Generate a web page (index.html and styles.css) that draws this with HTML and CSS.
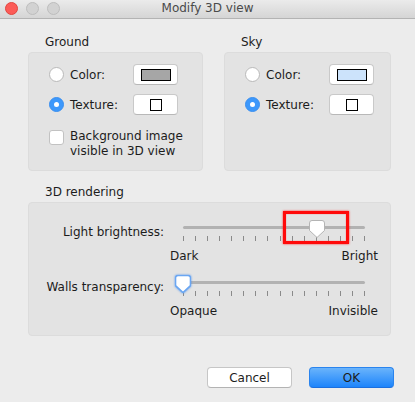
FILE: index.html
```html
<!DOCTYPE html>
<html lang="en">
<head>
    <title>Modify 3D view</title>
    <link rel="stylesheet" href="styles.css">
</head>
<body>
    <div class="titlebar">
        <div class="lights">
            <span class="light red"></span>
            <span class="light"></span>
            <span class="light"></span>
        </div>
        <div class="title">Modify 3D view</div>
    </div>

    <div class="content">
        <div class="top-row">
            <div class="group ground">
                <div class="group-label">Ground</div>
                <div class="panel">
                    <div class="choice-grid">
                        <label class="choice"><span class="radio"></span>Color:</label>
                        <button class="swatch-button"><span class="swatch gray"></span></button>
                        <label class="choice"><span class="radio checked"></span>Texture:</label>
                        <button class="swatch-button"><span class="texture"></span></button>
                    </div>
                    <label class="check-row">
                        <span class="checkbox"></span>
                        <span>Background image<br>visible in 3D view</span>
                    </label>
                </div>
            </div>
            <div class="group sky">
                <div class="group-label">Sky</div>
                <div class="panel">
                    <div class="choice-grid">
                        <label class="choice"><span class="radio"></span>Color:</label>
                        <button class="swatch-button"><span class="swatch blue"></span></button>
                        <label class="choice"><span class="radio checked"></span>Texture:</label>
                        <button class="swatch-button"><span class="texture"></span></button>
                    </div>
                </div>
            </div>
        </div>

        <div class="group rendering">
            <div class="group-label">3D rendering</div>
            <div class="panel slider-panel">
                <div class="slider-label">Light brightness:</div>
                <div class="slider">
                    <div class="track"></div>
                    <div class="ticks" id="ticks-light"></div>
                    <svg class="thumb" style="left: 139px;" width="16" height="18" viewBox="0 0 16 18">
                        <path d="M3 0.5H13A2.5 2.5 0 0 1 15.5 3V10.5L8 17.5L0.5 10.5V3A2.5 2.5 0 0 1 3 0.5Z" fill="#fff" stroke="#b4b4b4"/>
                    </svg>
                    <div class="highlight"></div>
                    <div class="scale"><span>Dark</span><span>Bright</span></div>
                </div>

                <div class="slider-label">Walls transparency:</div>
                <div class="slider">
                    <div class="track"></div>
                    <div class="ticks" id="ticks-walls"></div>
                    <svg class="thumb focused" style="left: 5px;" width="16" height="18" viewBox="0 0 16 18">
                        <path d="M3 0.5H13A2.5 2.5 0 0 1 15.5 3V10.5L8 17.5L0.5 10.5V3A2.5 2.5 0 0 1 3 0.5Z" fill="#fff" stroke="#6aa6f2" stroke-width="1.6"/>
                    </svg>
                    <div class="scale"><span>Opaque</span><span>Invisible</span></div>
                </div>
            </div>
        </div>

        <div class="buttons">
            <button class="push">Cancel</button>
            <button class="push default">OK</button>
        </div>
    </div>

    <script>
        // 16 ticks on each slider
        ['ticks-light', 'ticks-walls'].forEach(function(id) {
            var box = document.getElementById(id);
            for (var i = 0; i < 16; i++) {
                var tick = document.createElement('span');
                tick.className = 'tick';
                box.appendChild(tick);
            }
        });
    </script>
</body>
</html>
```

FILE: styles.css
```css
body {
    margin: 0;
    padding: 0;
    background-color: #ececec;
    font-family: 'DejaVu Sans', 'Liberation Sans', sans-serif;
    font-size: 12px;
    color: #1c1c1c;
    width: 415px;
    height: 402px;
    overflow: hidden;
}

.titlebar {
    height: 18px;
    position: relative;
    background: linear-gradient(#ebebeb, #d5d5d5);
    border-bottom: 1px solid #b3b3b3;
}
.lights {
    display: flex;
    gap: 8px;
    padding: 2px 0 0 5px;
}
.light {
    width: 11px;
    height: 11px;
    border-radius: 50%;
    background-color: #d2d2d2;
    border: 0.5px solid #bdbdbd;
}
.light.red {
    background-color: #fc5b57;
    border-color: #e1463f;
}
.title {
    position: absolute;
    left: 0;
    right: 0;
    top: 0;
    text-align: center;
    color: #4a4a4a;
    line-height: 16px;
}

.content {
    padding: 15px 24px 0 28px;
}
.top-row {
    display: flex;
    gap: 21px;
}
.group {
    display: flex;
    flex-direction: column;
}
.ground {
    width: 175px;
}
.sky {
    width: 167px;
}
.group-label {
    line-height: 16px;
    padding-left: 17px;
    margin-bottom: 2px;
}
.panel {
    flex: 1;
    background-color: #e3e3e3;
    border: 1px solid #dcdcdc;
    border-radius: 4px;
    padding: 11px 0 11px 20px;
}

.choice-grid {
    display: grid;
    grid-template-columns: 84px 45px;
    row-gap: 9px;
}
.choice {
    display: flex;
    align-items: center;
    gap: 6px;
}
.radio {
    width: 13px;
    height: 13px;
    border-radius: 50%;
    background-color: #fff;
    border: 1px solid #b9b9b9;
    box-sizing: content-box;
}
.radio.checked {
    background-color: #3d98fb;
    border-color: #3a8ff0;
    position: relative;
}
.radio.checked::after {
    content: '';
    position: absolute;
    left: 4px;
    top: 4px;
    width: 5px;
    height: 5px;
    border-radius: 50%;
    background-color: #fff;
}

.swatch-button {
    height: 21px;
    width: 45px;
    padding: 0;
    background-color: #fff;
    border: 1px solid #c9c9c9;
    border-bottom-color: #b8b8b8;
    border-radius: 4px;
    display: flex;
    align-items: center;
    justify-content: center;
}
.swatch {
    width: 28px;
    height: 10px;
    border: 1px solid #000;
}
.swatch.gray {
    background-color: #a6a6a6;
}
.swatch.blue {
    background-color: #cce3fb;
}
.texture {
    width: 10px;
    height: 10px;
    border: 1px solid #000;
    background-color: #fff;
}

.check-row {
    display: flex;
    gap: 6px;
    margin-top: 14px;
    line-height: 15px;
}
.checkbox {
    width: 13px;
    height: 13px;
    margin-top: 1px;
    background-color: #fff;
    border: 1px solid #c2c2c2;
    border-radius: 3px;
    flex-shrink: 0;
}

.rendering {
    margin-top: 13px;
}
.slider-panel {
    display: grid;
    grid-template-columns: 135px 208px;
    row-gap: 10px;
    padding: 16px 0 16px 6px;
}
.slider-label {
    text-align: right;
    line-height: 16px;
    margin-top: 5px;
    padding-right: 6px;
    white-space: nowrap;
}
.slider {
    position: relative;
    padding-top: 7px;
}
.track {
    margin: 0 13px;
    height: 3px;
    background-color: #b2b2b2;
    border-radius: 2px;
}
.ticks {
    display: flex;
    justify-content: space-between;
    margin: 7px 13px 0;
    height: 5px;
}
.tick {
    width: 1px;
    background-color: #8a8a8a;
}
.thumb {
    position: absolute;
    top: 1px;
}
.thumb.focused {
    filter: drop-shadow(0 0 1.2px #4d93f0);
}
.highlight {
    position: absolute;
    left: 113px;
    top: -8px;
    width: 60px;
    height: 27px;
    border: 3px solid #ff0a0a;
    box-shadow: 0 0 2px #ff3030, inset 0 0 1px #ff3030;
}
.scale {
    display: flex;
    justify-content: space-between;
    line-height: 16px;
    margin-top: 7px;
}

.buttons {
    display: flex;
    justify-content: flex-end;
    gap: 17px;
    margin-top: 31px;
    margin-right: -3px;
}
.push {
    height: 21px;
    width: 85px;
    font-family: 'DejaVu Sans', 'Liberation Sans', sans-serif;
    font-size: 12px;
    color: #1c1c1c;
    background-color: #fff;
    border: 1px solid #c6c6c6;
    border-bottom-color: #b3b3b3;
    border-radius: 4px;
    padding: 0;
}
.push.default {
    background: linear-gradient(#6ab4fb, #1d84fb);
    border-color: #2a84ee;
    border-bottom-color: #1b6fde;
}
```
